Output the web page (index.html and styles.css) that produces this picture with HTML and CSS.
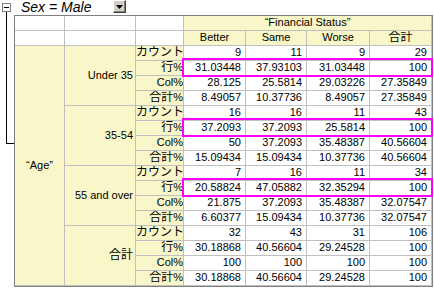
FILE: index.html
```html
<!DOCTYPE html>
<html>
<head>
<meta charset="utf-8">
<link rel="stylesheet" href="styles.css">
</head>
<body>
<div class="page">
  <div class="top">
    <span class="toggle"></span>
    <span class="title">Sex = Male</span>
    <span class="dropdown"><svg width="7" height="4" viewBox="0 0 7 4"><path d="M0 0H7L3.5 4Z" fill="#000"/></svg></span>
  </div>
  <div class="main">
    <div class="gutter"><div class="connector"></div></div>
    <div class="sheet">
      <div class="c blank"></div><div class="c blank"></div><div class="c blank"></div>
      <div class="c hd span4">“Financial Status”</div>

      <div class="c blank"></div><div class="c blank"></div><div class="c blank"></div>
      <div class="c hd">Better</div><div class="c hd">Same</div><div class="c hd">Worse</div><div class="c hd"><span class="j">合計</span></div>

      <div class="c age">“Age”</div>
      <div class="c grp">Under 35</div>
      <div class="c lbl"><span class="j">カウント</span></div><div class="c n">9</div><div class="c n">11</div><div class="c n">9</div><div class="c n">29</div>
      <div class="c lbl"><span class="j">行</span>%</div><div class="c n">31.03448</div><div class="c n">37.93103</div><div class="c n">31.03448</div><div class="c n">100</div>
      <div class="c lbl">Col%</div><div class="c n">28.125</div><div class="c n">25.5814</div><div class="c n">29.03226</div><div class="c n">27.35849</div>
      <div class="c lbl"><span class="j">合計</span>%</div><div class="c n">8.49057</div><div class="c n">10.37736</div><div class="c n">8.49057</div><div class="c n">27.35849</div>

      <div class="c grp">35-54</div>
      <div class="c lbl"><span class="j">カウント</span></div><div class="c n">16</div><div class="c n">16</div><div class="c n">11</div><div class="c n">43</div>
      <div class="c lbl"><span class="j">行</span>%</div><div class="c n">37.2093</div><div class="c n">37.2093</div><div class="c n">25.5814</div><div class="c n">100</div>
      <div class="c lbl">Col%</div><div class="c n">50</div><div class="c n">37.2093</div><div class="c n">35.48387</div><div class="c n">40.56604</div>
      <div class="c lbl"><span class="j">合計</span>%</div><div class="c n">15.09434</div><div class="c n">15.09434</div><div class="c n">10.37736</div><div class="c n">40.56604</div>

      <div class="c grp">55 and over</div>
      <div class="c lbl"><span class="j">カウント</span></div><div class="c n">7</div><div class="c n">16</div><div class="c n">11</div><div class="c n">34</div>
      <div class="c lbl"><span class="j">行</span>%</div><div class="c n">20.58824</div><div class="c n">47.05882</div><div class="c n">32.35294</div><div class="c n">100</div>
      <div class="c lbl">Col%</div><div class="c n">21.875</div><div class="c n">37.2093</div><div class="c n">35.48387</div><div class="c n">32.07547</div>
      <div class="c lbl"><span class="j">合計</span>%</div><div class="c n">6.60377</div><div class="c n">15.09434</div><div class="c n">10.37736</div><div class="c n">32.07547</div>

      <div class="c grp"><span class="j">合計</span></div>
      <div class="c lbl"><span class="j">カウント</span></div><div class="c n">32</div><div class="c n">43</div><div class="c n">31</div><div class="c n">106</div>
      <div class="c lbl"><span class="j">行</span>%</div><div class="c n">30.18868</div><div class="c n">40.56604</div><div class="c n">29.24528</div><div class="c n">100</div>
      <div class="c lbl">Col%</div><div class="c n">100</div><div class="c n">100</div><div class="c n">100</div><div class="c n">100</div>
      <div class="c lbl"><span class="j">合計</span>%</div><div class="c n">30.18868</div><div class="c n">40.56604</div><div class="c n">29.24528</div><div class="c n">100</div>

      <div class="hl hl1"></div>
      <div class="hl hl2"></div>
      <div class="hl hl3"></div>
    </div>
  </div>
</div>
</body>
</html>
```

FILE: styles.css
```css
html, body {
  margin: 0;
  padding: 0;
  background: #fff;
}

.page {
  width: 434px;
  height: 289px;
  overflow: hidden;
  font-family: "Liberation Sans", "Noto Sans CJK JP", sans-serif;
  color: #000;
}

.top {
  display: flex;
  align-items: flex-start;
  height: 15px;
}

.toggle {
  box-sizing: border-box;
  width: 9px;
  height: 9px;
  margin: 3px 0 0 2px;
  border: 1px solid #808080;
  background: #fff;
  display: flex;
  align-items: center;
  justify-content: center;
}

.toggle::before {
  content: "";
  width: 5px;
  height: 1px;
  background: #000;
}

.title {
  flex: 0 0 92px;
  margin-left: 10px;
  font-style: italic;
  font-size: 14px;
  line-height: 14px;
}

.dropdown {
  box-sizing: border-box;
  width: 13px;
  height: 13px;
  background: #d4d0c8;
  border-top: 1px solid #fff;
  border-left: 1px solid #fff;
  border-right: 1px solid #404040;
  border-bottom: 1px solid #404040;
  box-shadow: inset -1px -1px 0 #808080;
  display: flex;
  align-items: center;
  justify-content: center;
}

.dropdown svg {
  display: block;
}

.main {
  display: flex;
}

.gutter {
  width: 14px;
  flex: 0 0 14px;
}

.connector {
  box-sizing: border-box;
  width: 8px;
  height: 132px;
  margin: -3px 0 0 6px;
  border-left: 1px solid #000;
  border-bottom: 1px solid #000;
}

.sheet {
  position: relative;
  display: grid;
  grid-template-columns: 50px 71px 48px 62px 61px 63px 62px;
  grid-auto-rows: 15px;
  border: 1px solid #808080;
}

.c {
  box-sizing: border-box;
  border-right: 1px solid #c0c0c0;
  border-bottom: 1px solid #c0c0c0;
  font-size: 11px;
  line-height: 13px;
  white-space: nowrap;
  overflow: hidden;
}

.j {
  font-size: 12px;
  line-height: 13px;
}

.blank {
  background: #fff;
}

.hd {
  background: #f9f7c9;
  text-align: center;
}

.span4 {
  grid-column: span 4;
}

.age {
  grid-row: span 16;
  background: #f9f7c9;
  display: flex;
  align-items: center;
  justify-content: center;
}

.grp {
  grid-row: span 4;
  background: #f9f7c9;
  display: flex;
  align-items: center;
  justify-content: flex-end;
  padding-right: 2px;
}

.lbl {
  background: #f9f7c9;
  text-align: right;
  padding-right: 0;
}

.n {
  background: #fff;
  text-align: right;
  padding-right: 4px;
}

.hl {
  position: absolute;
  left: 167px;
  width: 251px;
  height: 19px;
  box-sizing: border-box;
  border: 2px solid #ff00ff;
}

.hl1 { top: 42px; }
.hl2 { top: 102px; }
.hl3 { top: 162px; }
```
